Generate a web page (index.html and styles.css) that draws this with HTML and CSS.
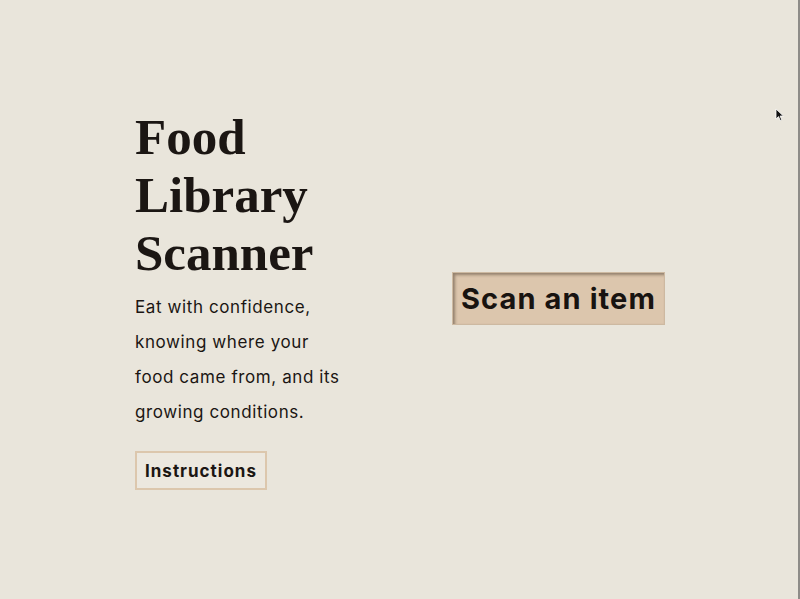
FILE: index.html
```html
<!DOCTYPE html>
<html lang="en">
<head>
<meta charset="utf-8">
<title>Food Library Scanner</title>
<link rel="stylesheet" href="styles.css">
</head>
<body>
<main class="page">
  <section class="intro">
    <h1 class="title">Food<br>Library<br>Scanner</h1>
    <p class="lead">Eat with confidence, knowing where your food came from, and its growing conditions.</p>
    <button class="btn-outline" type="button">Instructions</button>
  </section>
  <section class="action">
    <button class="btn-scan" type="button">Scan an item</button>
  </section>
</main>
<svg class="cursor" width="10" height="14" viewBox="0 0 10 14" aria-hidden="true">
  <path d="M1 1 L1 11 L3.5 8.6 L5.3 12.6 L6.8 11.9 L5.1 8 L8.4 8 Z" fill="#111" stroke="#fff" stroke-width="0.8"/>
</svg>
</body>
</html>
```

FILE: styles.css
```css
html, body {
  margin: 0;
  padding: 0;
  height: 100%;
}
body {
  background: #e9e5db;
  color: #1b1613;
  font-family: "Inter", "Noto Sans", sans-serif;
  border-right: 2px solid #8e8c88;
  box-sizing: border-box;
  overflow: hidden;
}
.page {
  height: 599px;
  display: flex;
  align-items: center;
  padding-left: 135px;
  box-sizing: border-box;
}
.intro {
  width: 220px;
  margin-bottom: 1px;
}
.title {
  margin: 0;
  font-family: "Liberation Serif", serif;
  font-weight: 700;
  font-size: 51px;
  line-height: 58px;
}
.lead {
  margin: 8px 0 21px;
  font-size: 17px;
  line-height: 35px;
  letter-spacing: 0.6px;
  width: 215px;
}
.btn-outline {
  font-family: "Inter", "Noto Sans", sans-serif;
  font-weight: 700;
  font-size: 17px;
  letter-spacing: 1px;
  color: #1b1613;
  background: #ece8df;
  border: 2px solid #dcc7ad;
  padding: 8px 8px;
  height: 39px;
}
.action {
  margin-left: 97px;
  margin-bottom: 2px;
}
.btn-scan {
  font-family: "Inter", "Noto Sans", sans-serif;
  font-weight: 700;
  font-size: 29px;
  letter-spacing: 1.1px;
  color: #181310;
  background: #dcc6ad;
  border: 1px solid #cdb9a1;
  box-shadow: inset 2px 2px 3px rgba(60, 45, 30, 0.45);
  padding: 0 8px;
  height: 53px;
}
.cursor {
  position: absolute;
  left: 775px;
  top: 108px;
}
```
